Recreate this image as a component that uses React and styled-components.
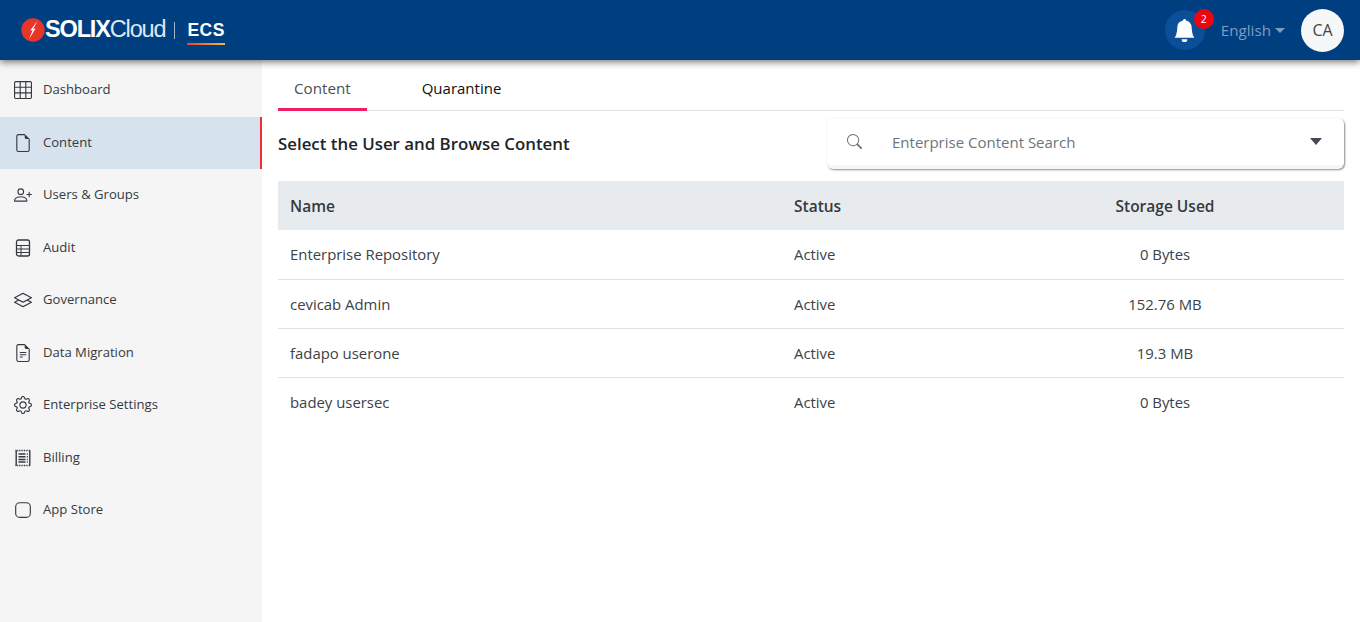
import React from "react";
import styled, { createGlobalStyle } from "styled-components";
import { BsGrid3X3, BsFileEarmark, BsPersonPlus, BsLayers, BsFileEarmarkText, BsGear, BsApp, BsSearch, BsBellFill } from "react-icons/bs";

const Global = createGlobalStyle`
  html, body { margin: 0; padding: 0; background: #fff; }
  body { font-family: "Open Sans", "Noto Sans", sans-serif; color: #212529; overflow: hidden; }
  * { box-sizing: border-box; }
`;

const Page = styled.div`
  width: 1360px;
  height: 622px;
  display: flex;
  flex-direction: column;
  overflow: hidden;
`;

const Header = styled.header`
  height: 60px;
  flex: none;
  background: #003f7f;
  display: flex;
  align-items: center;
  justify-content: space-between;
  padding: 0 16px 0 21px;
  box-shadow: 0 2px 7px rgba(0, 0, 0, 0.55);
  position: relative;
  z-index: 2;
`;

const Logo = styled.div`
  display: flex;
  align-items: center;
  color: #fff;
`;

const Wordmark = styled.span`
  font-family: "Liberation Sans", Arial, sans-serif;
  font-size: 23.5px;
  letter-spacing: -1.15px;
  line-height: 1;
  font-weight: 400;
  color: #dfe8f1;
  & > b { font-weight: 700; color: #fff; }
`;

const LogoDivider = styled.span`
  width: 1px;
  height: 17px;
  background: #9fb6cf;
  margin: 0 12px 0 9px;
`;

const Product = styled.span`
  font-family: "Liberation Sans", Arial, sans-serif;
  font-size: 17.5px;
  font-weight: 700;
  letter-spacing: 0.5px;
  color: #fff;
  padding-bottom: 3px;
  line-height: 19px;
  margin-top: 5px;
  border-bottom: 2px solid;
  border-image: linear-gradient(90deg, #e8412c, #f5b942) 1;
`;

const HeaderRight = styled.div`
  display: flex;
  align-items: center;
`;

const BellButton = styled.div`
  width: 40px;
  height: 40px;
  border-radius: 50%;
  background: #0a4f98;
  display: flex;
  align-items: center;
  justify-content: center;
  position: relative;
  color: #fff;
  font-size: 23px;
  margin-right: 16px;
`;

const Badge = styled.span`
  position: absolute;
  top: -1px;
  right: -9px;
  width: 20px;
  height: 20px;
  border-radius: 50%;
  background: #f0040f;
  color: #fff;
  font-size: 10.5px;
  display: flex;
  align-items: center;
  justify-content: center;
`;

const Language = styled.div`
  color: #7c9cc4;
  font-size: 15.2px;
  display: flex;
  align-items: center;
  margin-right: 16px;
  &::after {
    content: "";
    margin-left: 4px;
    border-top: 5px solid #7c9cc4;
    border-left: 5px solid transparent;
    border-right: 5px solid transparent;
  }
`;

const Avatar = styled.div`
  width: 43px;
  height: 43px;
  border-radius: 50%;
  background: #f6f7f9;
  color: #444;
  font-size: 16px;
  display: flex;
  align-items: center;
  justify-content: center;
`;

const Body = styled.div`
  flex: 1;
  display: flex;
  min-height: 0;
`;

const Sidebar = styled.nav`
  width: 262px;
  flex: none;
  background: #f5f5f5;
  padding-top: 4px;
`;

const NavItem = styled.div`
  height: 52.5px;
  display: flex;
  align-items: center;
  gap: 11px;
  padding-left: 14px;
  font-size: 13.1px;
  color: #343a40;
  background: ${(p) => (p.$active ? "#d6e2ee" : "transparent")};
  border-right: 2px solid ${(p) => (p.$active ? "#e8302f" : "transparent")};
  & > svg { width: 18px; height: 18px; flex: none; color: #343a40; }
`;

const NavLabel = styled.span`
  position: relative;
  top: -1px;
`;

const Main = styled.main`
  flex: 1;
  padding: 0 16px;
  min-width: 0;
`;

const Tabs = styled.div`
  height: 51px;
  display: flex;
  border-bottom: 1px solid #dee2e6;
`;

const Tab = styled.div`
  height: 51px;
  padding: 7px 16px 0;
  display: flex;
  align-items: center;
  font-size: ${(p) => (p.$active ? "15.2px" : "15px")};
  margin-right: ${(p) => (p.$active ? "39px" : "0")};
  color: ${(p) => (p.$active ? "#495057" : "#111")};
  border-bottom: 3px solid ${(p) => (p.$active ? "#f01d63" : "transparent")};
`;

const TitleRow = styled.div`
  height: 70px;
  display: flex;
  align-items: flex-start;
  justify-content: space-between;
`;

const Title = styled.h2`
  margin: 21px 0 0;
  font-size: 16.85px;
  line-height: 24px;
  font-weight: 600;
  color: #212529;
`;

const SearchBox = styled.div`
  width: 517px;
  height: 51px;
  margin-top: 7px;
  background: #fff;
  border-bottom: 4px solid #f6f6f6;
  border-radius: 6px;
  box-shadow: 1px 1px 2px rgba(0, 0, 0, 0.45), 0 0 1px rgba(0, 0, 0, 0.04);
  display: flex;
  align-items: center;
  padding: 0 22px 0 20px;
  color: #6c757d;
  & > svg { width: 15px; height: 15px; flex: none; }
`;

const SearchText = styled.span`
  flex: 1;
  margin-left: 30px;
  font-size: 15px;
`;

const Caret = styled.span`
  border-top: 7px solid #444b52;
  border-left: 6px solid transparent;
  border-right: 6px solid transparent;
`;

const Table = styled.table`
  width: 1066px;
  border-collapse: collapse;
  table-layout: fixed;
  font-size: 14.9px;
`;

const HeadCell = styled.th`
  height: 49px;
  background: #e8ebee;
  padding: 0 12px;
  font-size: 15.5px;
  font-weight: 600;
  color: #343a40;
  text-align: ${(p) => (p.$center ? "center" : "left")};
`;

const Cell = styled.td`
  height: 49px;
  padding: 0 12px;
  color: #3c4248;
  border-bottom: 1px solid #dee2e6;
  text-align: ${(p) => (p.$center ? "center" : "left")};
`;

const LastCell = styled(Cell)`
  border-bottom: 0;
`;

const FlashLogo = () => (
  <svg width="24" height="24" viewBox="0 0 24 24" aria-hidden="true">
    <circle cx="12" cy="12" r="11.7" fill="#e8352b" />
    <path d="M16.5 2.8 L9.2 12.6 L11.6 12.2 L8 21.2 L14.6 10.6 L12.2 11 Z" fill="#fff" />
  </svg>
);

const AuditIcon = () => (
  <svg viewBox="0 0 18 18" fill="none" stroke="currentColor" aria-hidden="true">
    <rect x="2.5" y="1" width="13" height="16" rx="2" strokeWidth="1.3" />
    <path d="M2.5 6.5h13M2.5 10h13M2.5 13.5h13M7 6.5V17" strokeWidth="1" />
  </svg>
);

const BillingIcon = () => (
  <svg viewBox="0 0 18 18" fill="none" stroke="currentColor" aria-hidden="true">
    <path d="M2.2 1.5V16.5M15.8 1.5V16.5" strokeWidth="1.4" />
    <path d="M1.5 1.5h15M1.5 16.5h15" strokeWidth="1.4" strokeDasharray="1 .7" />
    <path d="M4.5 5h7M4.5 7.7h7M4.5 10.4h7M4.5 13h7" strokeWidth="1.5" />
    <path d="M12.8 5h1M12.8 7.7h1M12.8 10.4h1M12.8 13h1" strokeWidth="1.5" />
  </svg>
);

const navItems = [
  ["Dashboard", BsGrid3X3],
  ["Content", BsFileEarmark, true],
  ["Users & Groups", BsPersonPlus],
  ["Audit", AuditIcon],
  ["Governance", BsLayers],
  ["Data Migration", BsFileEarmarkText],
  ["Enterprise Settings", BsGear],
  ["Billing", BillingIcon],
  ["App Store", BsApp],
];

const rows = [
  ["Enterprise Repository", "Active", "0 Bytes"],
  ["cevicab Admin", "Active", "152.76 MB"],
  ["fadapo userone", "Active", "19.3 MB"],
  ["badey usersec", "Active", "0 Bytes"],
];

export default function App() {
  return (
    <Page>
      <Global />
      <Header>
        <Logo>
          <FlashLogo />
          <Wordmark><b>SOLIX</b>Cloud</Wordmark>
          <LogoDivider />
          <Product>ECS</Product>
        </Logo>
        <HeaderRight>
          <BellButton>
            <BsBellFill />
            <Badge>2</Badge>
          </BellButton>
          <Language>English</Language>
          <Avatar>CA</Avatar>
        </HeaderRight>
      </Header>
      <Body>
        <Sidebar>
          {navItems.map(([label, Icon, active]) => (
            <NavItem key={label} $active={active}>
              <Icon />
              <NavLabel>{label}</NavLabel>
            </NavItem>
          ))}
        </Sidebar>
        <Main>
          <Tabs>
            <Tab $active>Content</Tab>
            <Tab>Quarantine</Tab>
          </Tabs>
          <TitleRow>
            <Title>Select the User and Browse Content</Title>
            <SearchBox>
              <BsSearch />
              <SearchText>Enterprise Content Search</SearchText>
              <Caret />
            </SearchBox>
          </TitleRow>
          <Table>
            <colgroup>
              <col style={{ width: 504 }} />
              <col style={{ width: 204 }} />
              <col style={{ width: 358 }} />
            </colgroup>
            <thead>
              <tr>
                <HeadCell>Name</HeadCell>
                <HeadCell>Status</HeadCell>
                <HeadCell $center>Storage Used</HeadCell>
              </tr>
            </thead>
            <tbody>
              {rows.map((r, i) => {
                const C = i === rows.length - 1 ? LastCell : Cell;
                return (
                  <tr key={r[0]}>
                    <C>{r[0]}</C>
                    <C>{r[1]}</C>
                    <C $center>{r[2]}</C>
                  </tr>
                );
              })}
            </tbody>
          </Table>
        </Main>
      </Body>
    </Page>
  );
}
